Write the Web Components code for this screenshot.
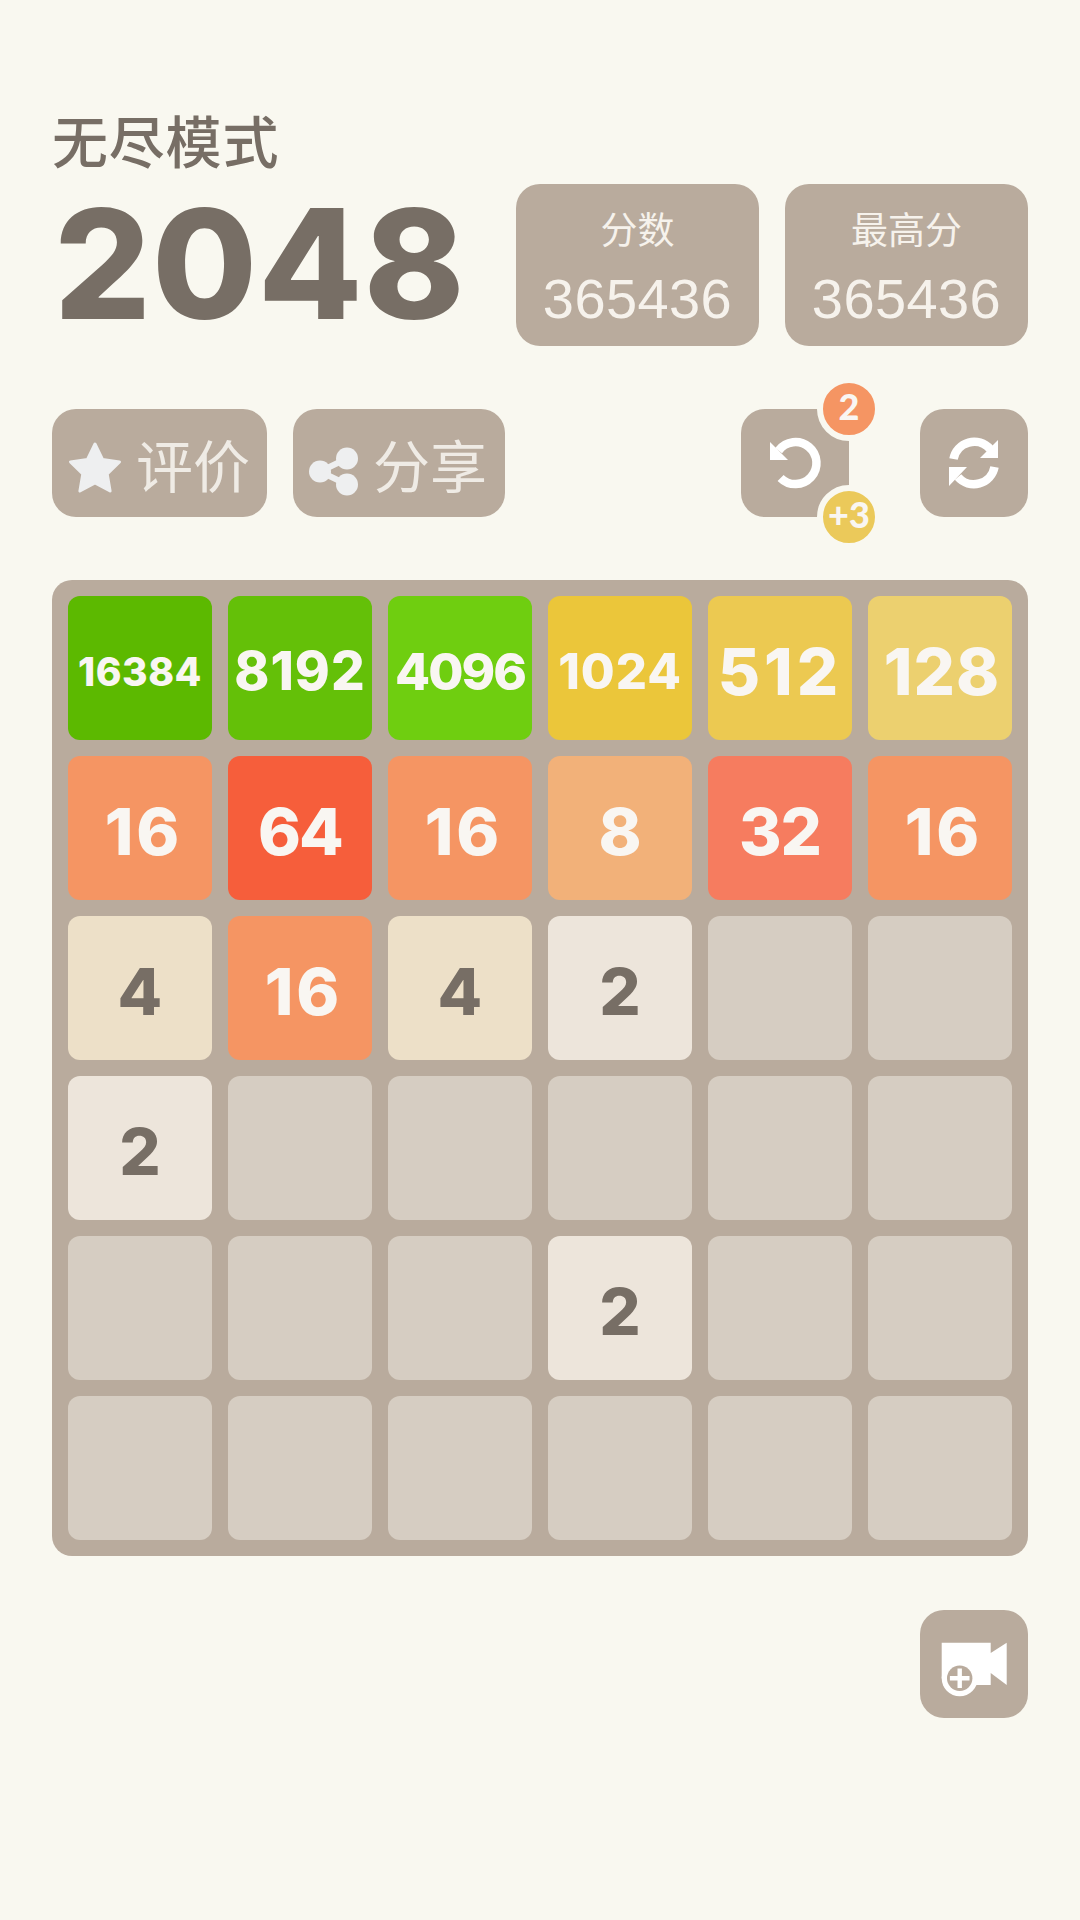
<!DOCTYPE html>
<html lang="zh">
<head>
<meta charset="utf-8">
<title>2048</title>
<style>
  html, body { margin: 0; background: #f9f8f0; }
  body { font-family: "Liberation Sans", "Noto Sans CJK SC", sans-serif; }
</style>
</head>
<body>
<game-app></game-app>

<script>
// Score box in the header
class ScoreBox extends HTMLElement {
  constructor() {
    super();
    this.attachShadow({ mode: 'open' });
    this.shadowRoot.innerHTML = `
      <style>
        :host {
          display: block;
          width: 243px;
          height: 162px;
          box-sizing: border-box;
          padding-top: 25px;
          background: #b9ab9d;
          border-radius: 24px;
          color: #f6f2ec;
          text-align: center;
        }
        .label {
          font: 37px/38px "Noto Sans CJK SC", sans-serif;
        }
        .value {
          margin-top: 20px;
          font: 56px/64px "Liberation Sans", sans-serif;
          letter-spacing: 0.4px;
        }
      </style>
      <div class="label">${this.getAttribute('label') || ''}</div>
      <div class="value">${this.getAttribute('value') || ''}</div>
    `;
  }
}

// Rounded square/pill button, icon and text go through the slots
class ActionButton extends HTMLElement {
  constructor() {
    super();
    this.attachShadow({ mode: 'open' });
    this.shadowRoot.innerHTML = `
      <style>
        :host {
          display: flex;
          align-items: center;
          position: relative;
          height: 108px;
          min-width: 108px;
          box-sizing: border-box;
          background: #b9ab9d;
          border-radius: 24px;
          color: #efebe5;
          font: 57px/120px "Noto Sans CJK SC", sans-serif;
        }
        ::slotted(svg) { display: block; flex: none; }
      </style>
      <slot></slot>
    `;
  }
}

// Little round counter sitting on the corner of the undo button
class CountBadge extends HTMLElement {
  constructor() {
    super();
    this.attachShadow({ mode: 'open' });
    this.shadowRoot.innerHTML = `
      <style>
        :host {
          position: absolute;
          right: -32px;
          width: 52px;
          height: 52px;
          border: 6px solid #f9f8f0;
          border-radius: 50%;
          background: var(--badge-color, #f59563);
          color: #f9f6f2;
          font: 900 36px/47px Lato, sans-serif;
          text-align: center;
        }
        :host([place="top"]) { top: -32px; }
        :host([place="bottom"]) { bottom: -32px; }
      </style>
      <slot></slot>
    `;
  }
}

// One cell of the board, value attribute picks the colour and the text size
class GameTile extends HTMLElement {
  // background, text colour, font size, letter spacing, left padding
  static get styles() {
    return {
      '2': ['#ede5db', '#776e65', 65, 0, 0],
      '4': ['#ede0c8', '#776e65', 65, 0, 0],
      '8': ['#f2b179', '#f9f6f2', 65, 0, 0],
      '16': ['#f59563', '#f9f6f2', 65, 3, 7],
      '32': ['#f67c5f', '#f9f6f2', 65, -1, 0],
      '64': ['#f65e3b', '#f9f6f2', 65, -2, 0],
      '128': ['#ecd06f', '#f9f6f2', 65, 1, 4],
      '512': ['#ecc951', '#f9f6f2', 65, 4, 0],
      '1024': ['#ebc63a', '#f9f6f2', 49, 1, 0],
      '4096': ['#6fce10', '#f9f6f2', 51, -2, 0],
      '8192': ['#64c008', '#f9f6f2', 53, 1, 0],
      '16384': ['#5cb900', '#f9f6f2', 39, 0.5, 0]
    };
  }

  constructor() {
    super();
    this.attachShadow({ mode: 'open' });
  }

  connectedCallback() {
    const value = this.getAttribute('value') || '';
    const [bg, color, size, spacing, left] = GameTile.styles[value] || ['#d6cdc2', '#776e65', 65, 0, 0];
    this.shadowRoot.innerHTML = `
      <style>
        :host {
          display: flex;
          align-items: center;
          justify-content: center;
          width: 144px;
          height: 144px;
          box-sizing: border-box;
          padding: 7px 0 0 ${left}px;
          background: ${bg};
          border-radius: 12px;
          color: ${color};
          font: 800 ${size}px/1 Inter, sans-serif;
          letter-spacing: ${spacing}px;
        }
      </style>
      ${value}
    `;
  }
}

class GameBoard extends HTMLElement {
  constructor() {
    super();
    this.attachShadow({ mode: 'open' });
    this.shadowRoot.innerHTML = `
      <style>
        :host {
          display: grid;
          grid-template-columns: repeat(6, 144px);
          gap: 16px;
          padding: 16px;
          background: #b9ab9d;
          border-radius: 20px;
        }
      </style>
      <slot></slot>
    `;
  }

  connectedCallback() {
    const rows = (this.getAttribute('cells') || '').split(' ');
    rows.forEach((v) => {
      const tile = document.createElement('game-tile');
      if (v !== '0') tile.setAttribute('value', v);
      this.appendChild(tile);
    });
  }
}

class GameApp extends HTMLElement {
  constructor() {
    super();
    this.attachShadow({ mode: 'open' });
    this.shadowRoot.innerHTML = `
      <style>
        :host {
          display: block;
          padding: 111px 52px 0;
          min-height: 1920px;
          box-sizing: border-box;
        }
        .mode {
          color: #776e65;
          font: 500 56px/56px "Noto Sans CJK SC", sans-serif;
          letter-spacing: 0.8px;
        }
        .head {
          display: flex;
          align-items: center;
          margin-top: 17px;
        }
        .logo {
          flex: 1;
          padding: 0 0 3px 2px;
          color: #776e65;
          font: 800 152px/1 Inter, sans-serif;
          letter-spacing: 1px;
        }
        .scores { display: flex; gap: 26px; }
        .actions {
          display: flex;
          justify-content: space-between;
          margin-top: 63px;
        }
        .group { display: flex; gap: 26px; }
        .group.tools { gap: 71px; }
        .rate { width: 215px; }
        .share { width: 212px; }
        .rate svg { margin: 9px 14px 0 16px; }
        .share svg { margin: 17px 14px 0 16px; }
        game-board { margin-top: 63px; }
        .foot {
          display: flex;
          justify-content: flex-end;
          margin-top: 54px;
        }
        .second { --badge-color: #ebc95a; }
      </style>

      <div class="mode">无尽模式</div>
      <div class="head">
        <div class="logo">2048</div>
        <div class="scores">
          <score-box label="分数" value="365436"></score-box>
          <score-box label="最高分" value="365436"></score-box>
        </div>
      </div>

      <div class="actions">
        <div class="group">
          <action-button class="rate">
            <svg width="54" height="54" viewBox="0 0 54 54"><path fill="#eeeff0" stroke="#eeeff0" stroke-width="3" stroke-linejoin="round" d="M27 3l7.500 15.500 17 2.400-12.300 12 2.900 17L27 42l-15.100 8 2.900-17L2.500 20.900l17-2.400z"/></svg>评价
          </action-button>
          <action-button class="share">
            <svg width="50" height="50" viewBox="0 0 50 50" fill="#eeeff0"><path fill="none" stroke="#eeeff0" stroke-width="6" d="M11 24.500L38 11.500M11 24.500L38 37.500"/><circle cx="11" cy="24.500" r="11"/><circle cx="38" cy="11.500" r="11"/><circle cx="38" cy="37.500" r="11"/></svg>分享
          </action-button>
        </div>
        <div class="group tools">
          <action-button>
            <svg width="108" height="108" viewBox="0 0 108 108"><path fill="none" stroke="#fff" stroke-width="8.500" d="M39.600 68.900A21 21 0 1 0 37.600 41.600"/><path fill="#fff" d="M29 33v18h18z"/></svg>
            <count-badge place="top">2</count-badge>
            <count-badge place="bottom" class="second">+3</count-badge>
          </action-button>
          <action-button>
            <svg width="108" height="108" viewBox="0 0 108 108"><path fill="none" stroke="#fff" stroke-width="8.500" d="M33.500 50A21 21 0 0 1 70 40M74.500 58A21 21 0 0 1 38 68"/><path fill="#fff" d="M78 31v18H60zM29 77V58h18z"/></svg>
          </action-button>
        </div>
      </div>

      <game-board cells="16384 8192 4096 1024 512 128 16 64 16 8 32 16 4 16 4 2 0 0 2 0 0 0 0 0 0 0 0 2 0 0 0 0 0 0 0 0"></game-board>

      <div class="foot">
        <action-button>
          <svg width="108" height="108" viewBox="0 0 108 108" fill="#fff"><path d="M21.700 32.700H70.700V43L86.700 32.700V75L70.700 63V75H39V68H21.700z"/><circle cx="39.700" cy="68.300" r="18"/><circle cx="39.700" cy="68.300" r="12.700" fill="#b9ab9d"/><path d="M37.500 58.500h4.400v7.600h7.600v4.400h-7.600v7.600h-4.400v-7.600h-7.600v-4.400h7.600z"/></svg>
        </action-button>
      </div>
    `;
  }
}

customElements.define('score-box', ScoreBox);
customElements.define('action-button', ActionButton);
customElements.define('count-badge', CountBadge);
customElements.define('game-tile', GameTile);
customElements.define('game-board', GameBoard);
customElements.define('game-app', GameApp);
</script>
</body>
</html>
